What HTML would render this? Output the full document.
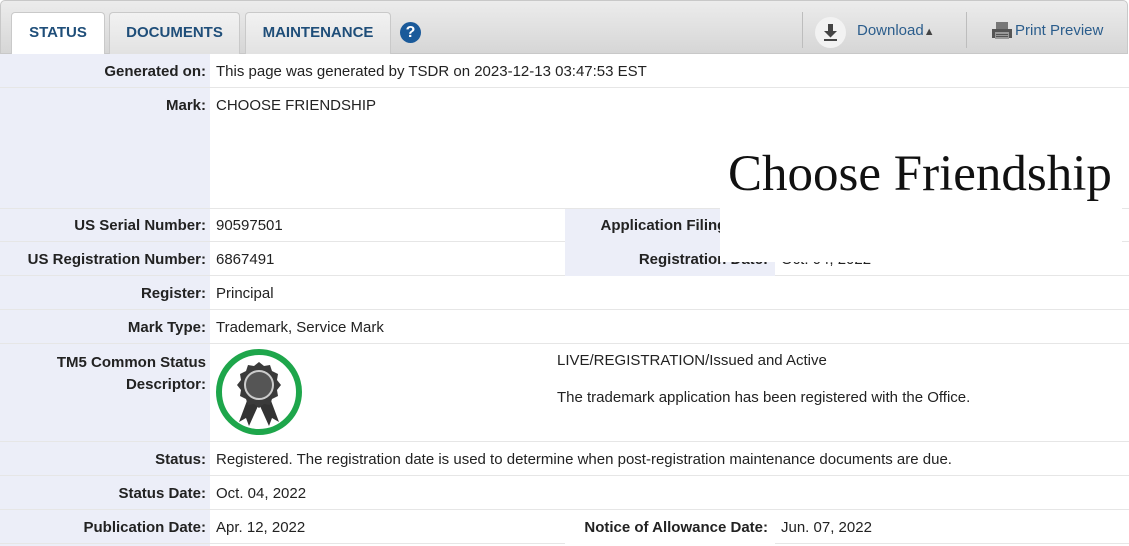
<!DOCTYPE html>
<html><head><style>
*{margin:0;padding:0;box-sizing:border-box}
body{width:1129px;height:546px;overflow:hidden;background:#fff;font-family:"Liberation Sans",Arial,sans-serif;font-size:15px;color:#222;position:relative}
.bar{position:absolute;left:0;top:0;width:1128px;height:54px;border:1px solid #c8c8c8;border-radius:5px 5px 0 0;background:linear-gradient(#ececec,#d6d6d6);}
.tab{position:absolute;top:12px;height:42px;border:1px solid #c9c9c9;border-bottom:none;border-radius:4px 4px 0 0;background:linear-gradient(#f2f2f2,#e2e2e2);font-weight:bold;color:#1f4e79;font-size:15px;text-align:center;line-height:40px}
.tab.act{background:#fff;height:43px;color:#1f4e79}
.help{position:absolute;left:400px;top:22px;width:21px;height:21px;border-radius:50%;background:#1a5a9a;color:#fff;font-weight:bold;font-size:16px;text-align:center;line-height:21px}
.sep{position:absolute;top:12px;width:1px;height:36px;background:#bdbdbd}
.rt{position:absolute;top:22px;color:#2b5d8c;font-size:15px}
.lab{position:absolute;left:0;width:210px;background:#eceef8}
.row{position:absolute;left:0;width:1129px;border-bottom:1px solid #e6e6e6}
.l{position:absolute;font-weight:bold;text-align:right;color:#222;white-space:nowrap}
.v{position:absolute;color:#222;white-space:nowrap}
</style></head><body>
<div class="bar"></div>
<div class="tab act" style="left:11px;width:94px">STATUS</div>
<div class="tab" style="left:109px;width:131px">DOCUMENTS</div>
<div class="tab" style="left:245px;width:146px">MAINTENANCE</div>
<div class="help">?</div>
<div class="sep" style="left:802px"></div>
<div class="sep" style="left:966px"></div>
<div style="position:absolute;left:815px;top:17px;width:31px;height:31px;border-radius:50%;background:#f2f2f2"></div>
<svg style="position:absolute;left:820px;top:22px" width="21" height="21" viewBox="0 0 21 21"><path d="M8 2h5v7h4l-6.5 6.5L4 9h4z" fill="#444"/><rect x="4" y="17" width="13" height="2" fill="#444"/></svg>
<div class="rt" style="left:857px">Download<span style="font-size:11px;color:#444">&#9650;</span></div>
<svg style="position:absolute;left:991px;top:21px" width="22" height="20" viewBox="0 0 22 20"><rect x="5" y="1" width="12" height="7" fill="#777"/><rect x="1" y="8" width="20" height="9" fill="#555"/><rect x="4" y="11" width="14" height="7" fill="#999"/><rect x="5" y="13" width="12" height="1" fill="#555"/><rect x="5" y="15" width="12" height="1" fill="#555"/></svg>
<div class="rt" style="left:1015px">Print Preview</div>

<div class="lab" style="top:54px;height:492px"></div>
<div class="row" style="top:54px;height:34px"></div>
<div class="row" style="top:88px;height:121px"></div>
<div class="row" style="top:209px;height:33px"></div>
<div class="row" style="top:242px;height:34px"></div>
<div class="row" style="top:276px;height:34px"></div>
<div class="row" style="top:310px;height:34px"></div>
<div class="row" style="top:344px;height:98px"></div>
<div class="row" style="top:442px;height:34px"></div>
<div class="row" style="top:476px;height:34px"></div>
<div class="row" style="top:510px;height:34px"></div>
<div class="lab" style="left:565px;top:209px;height:67px;width:210px"></div>
<div class="lab" style="left:565px;top:510px;height:34px;width:210px;background:#fff"></div>

<div class="l" style="right:923px;top:63px">Generated on:</div><div class="v" style="left:216px;top:63px">This page was generated by TSDR on 2023-12-13 03:47:53 EST</div>
<div class="l" style="right:923px;top:97px">Mark:</div><div class="v" style="left:216px;top:97px">CHOOSE FRIENDSHIP</div>
<div class="l" style="right:923px;top:217px">US Serial Number:</div><div class="v" style="left:216px;top:217px">90597501</div>
<div class="l" style="right:361px;top:217px">Application Filing Date:</div>
<div class="l" style="right:923px;top:251px">US Registration Number:</div><div class="v" style="left:216px;top:251px">6867491</div>
<div class="l" style="right:361px;top:251px">Registration Date:</div><div class="v" style="left:781px;top:251px">Oct. 04, 2022</div>
<div style="position:absolute;left:720px;top:120px;width:402px;height:142px;background:#fff"></div>
<div style="position:absolute;left:728px;top:145px;font-family:'Liberation Serif',serif;font-size:51px;color:#111;white-space:nowrap">Choose Friendship</div>
<div class="l" style="right:923px;top:285px">Register:</div><div class="v" style="left:216px;top:285px">Principal</div>
<div class="l" style="right:923px;top:319px">Mark Type:</div><div class="v" style="left:216px;top:319px">Trademark, Service Mark</div>
<div class="l" style="right:923px;top:352px;line-height:22px">TM5 Common Status<br>Descriptor:</div>
<svg style="position:absolute;left:215px;top:348px" width="90" height="90" viewBox="0 0 90 90"><circle cx="44" cy="44" r="40" fill="#fff" stroke="#1ea64b" stroke-width="6"/><path d="M33 50 L24 74 L31 70 L34 78 L43 58 Z M55 50 L64 74 L57 70 L54 78 L45 58 Z" fill="#333"/><path d="M44 14 l5 4 6-1 2 6 6 3-1 6 4 5-4 5 1 6-6 3-2 6-6-1-5 4-5-4-6 1-2-6-6-3 1-6-4-5 4-5-1-6 6-3 2-6 6 1z" fill="#3a3a3a"/><circle cx="44" cy="37" r="14" fill="#555" stroke="#ccc" stroke-width="2"/></svg>
<div class="v" style="left:557px;top:352px">LIVE/REGISTRATION/Issued and Active</div>
<div class="v" style="left:557px;top:389px">The trademark application has been registered with the Office.</div>
<div class="l" style="right:923px;top:451px">Status:</div><div class="v" style="left:216px;top:451px">Registered. The registration date is used to determine when post-registration maintenance documents are due.</div>
<div class="l" style="right:923px;top:485px">Status Date:</div><div class="v" style="left:216px;top:485px">Oct. 04, 2022</div>
<div class="l" style="right:923px;top:519px">Publication Date:</div><div class="v" style="left:216px;top:519px">Apr. 12, 2022</div>
<div class="l" style="right:361px;top:519px">Notice of Allowance Date:</div><div class="v" style="left:781px;top:519px">Jun. 07, 2022</div>
</body></html>
